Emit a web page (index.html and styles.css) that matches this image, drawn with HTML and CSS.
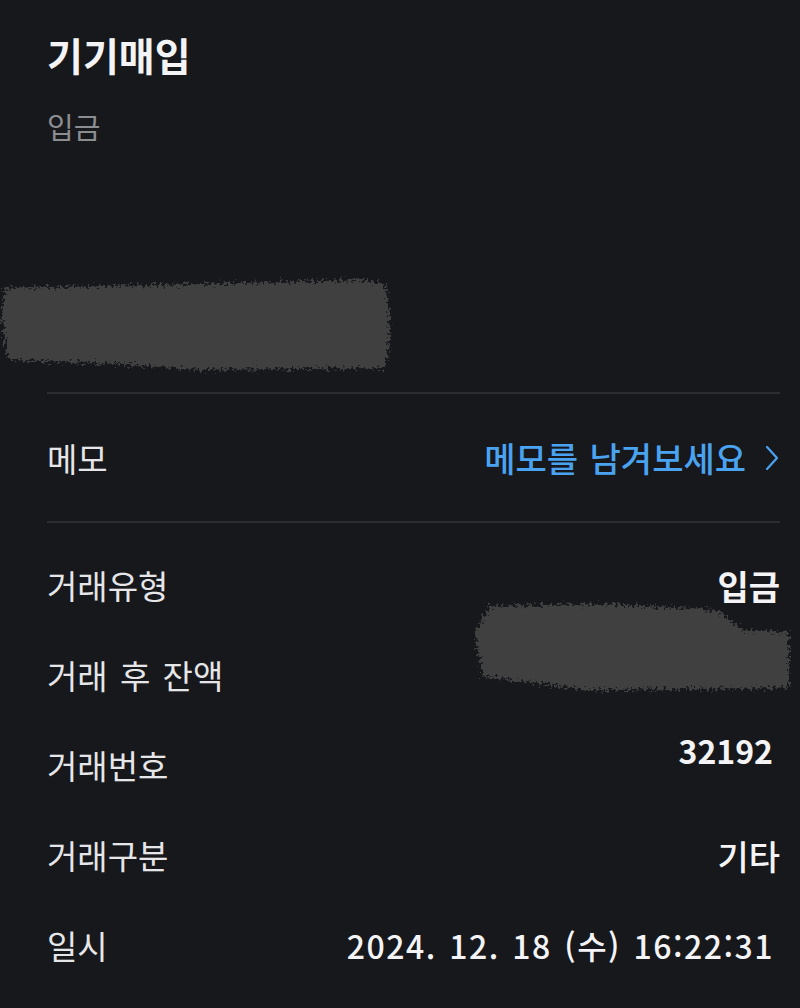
FILE: index.html
```html
<!DOCTYPE html>
<html lang="ko">
<head>
<meta charset="utf-8">
<link rel="stylesheet" href="styles.css">
</head>
<body>
<div class="page">
  <header class="head">
    <h1 class="title">기기매입</h1>
    <div class="subtitle">입금</div>
  </header>
  <div class="amount-area">
    <svg class="redact redact-1" viewBox="0 0 400 110" preserveAspectRatio="none">
      <defs>
        <filter id="rough1" x="-10%" y="-20%" width="120%" height="140%">
          <feTurbulence type="fractalNoise" baseFrequency="0.35" numOctaves="3" seed="3" result="n"/>
          <feDisplacementMap in="SourceGraphic" in2="n" scale="14" xChannelSelector="R" yChannelSelector="G"/>
        </filter>
      </defs>
      <path d="M4 18 L200 14 L360 10 L386 14 L390 60 L386 98 L200 100 L120 94 L8 90 L2 50 Z" fill="#3f3f41" filter="url(#rough1)"/>
    </svg>
  </div>
  <div class="divider"></div>
  <div class="row memo-row">
    <span class="label">메모</span>
    <span class="memo-link">메모를 남겨보세요
      <svg class="chev" viewBox="0 0 16 28"><path d="M3 3 L13 14 L3 25" fill="none" stroke="#4aa3f0" stroke-width="2.2" stroke-linecap="round" stroke-linejoin="round"/></svg>
    </span>
  </div>
  <div class="divider"></div>
  <div class="details">
    <div class="row">
      <span class="label">거래유형</span>
      <span class="value">입금</span>
    </div>
    <div class="row balance-row">
      <span class="label">거래 후 잔액</span>
      <svg class="redact redact-2" viewBox="0 0 330 100" preserveAspectRatio="none">
        <defs>
          <filter id="rough2" x="-10%" y="-20%" width="120%" height="140%">
            <feTurbulence type="fractalNoise" baseFrequency="0.35" numOctaves="3" seed="7" result="n"/>
            <feDisplacementMap in="SourceGraphic" in2="n" scale="14" xChannelSelector="R" yChannelSelector="G"/>
          </filter>
        </defs>
        <path d="M22 12 L140 10 L250 16 L275 36 L322 38 L322 94 L120 96 L16 82 L8 40 Z" fill="#3f3f41" filter="url(#rough2)"/>
      </svg>
    </div>
    <div class="row">
      <span class="label">거래번호</span>
      <span class="value num value-up">32192</span>
    </div>
    <div class="row">
      <span class="label">거래구분</span>
      <span class="value medium">기타</span>
    </div>
    <div class="row">
      <span class="label">일시</span>
      <span class="value num medium date">2024. 12. 18 (수) 16:22:31</span>
    </div>
  </div>
</div>
</body>
</html>
```

FILE: styles.css
```css
html, body {
  margin: 0;
  padding: 0;
  background: #17181c;
}
body {
  font-family: "Noto Sans CJK KR", "Noto Sans", sans-serif;
  color: #ececee;
  width: 800px;
  height: 1008px;
  overflow: hidden;
}
.page {
  padding: 0 20px 0 47px;
}
.head {
  padding-top: 28px;
}
.title {
  margin: 0;
  font-size: 39px;
  font-weight: 700;
  line-height: 52px;
  color: #f4f4f6;
}
.subtitle {
  margin-top: 28px;
  font-size: 29px;
  line-height: 36px;
  color: #8c8d91;
}
.amount-area {
  position: relative;
  height: 248px;
  margin-left: -47px;
}
.redact {
  position: absolute;
  display: block;
}
.redact-1 {
  left: 0;
  top: 126px;
  width: 400px;
  height: 110px;
}
.divider {
  height: 2px;
  background: #2c2d31;
}
.row {
  display: flex;
  justify-content: space-between;
  align-items: center;
  font-size: 33px;
  height: 90px;
}
.memo-row {
  height: 127px;
}
.label {
  color: #e6e6e8;
  word-spacing: 3px;
}
.memo-link {
  color: #4aa3f0;
  display: flex;
  align-items: center;
  gap: 18px;
  font-size: 34px;
  font-weight: 500;
  word-spacing: 2px;
}
.chev {
  width: 16px;
  height: 28px;
}
.details {
  padding-top: 17px;
}
.value {
  font-weight: 700;
  color: #f4f4f6;
  font-size: 34px;
}
.value.medium {
  font-weight: 500;
}
.value.num {
  font-size: 32px;
}
.date {
  letter-spacing: 1.5px;
  word-spacing: 2px;
  margin-right: 6px;
}
.value-up {
  margin-top: -30px;
  margin-right: 7px;
}
.balance-row {
  position: relative;
}
.redact-2 {
  left: 420px;
  top: -36px;
  width: 330px;
  height: 100px;
}
```
